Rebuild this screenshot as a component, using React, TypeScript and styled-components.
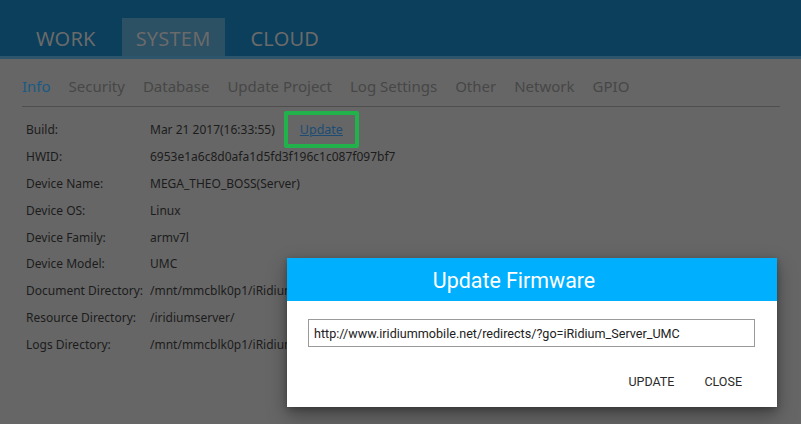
import React from "react";
import styled, { createGlobalStyle } from "styled-components";

const Global = createGlobalStyle`
  html, body { margin: 0; padding: 0; background: #666666; }
  body { width: 801px; height: 424px; overflow: hidden; font-family: "Noto Sans", "Open Sans", sans-serif; }
`;

const Page = styled.div`
  position: relative;
  width: 801px;
  height: 424px;
  background: #666666;
`;

const Header = styled.header`
  height: 56px;
  background: #0b3f5c;
  border-bottom: 3px solid #2d566c;
  display: flex;
  align-items: flex-end;
  padding-left: 22px;
  gap: 12px;
`;

const MainTab = styled.div<{ $active?: boolean }>`
  height: 38px;
  padding: 0 14px;
  display: flex;
  align-items: center;
  font-size: 20px;
  color: #6a6a6a;
  background: ${(p) => (p.$active ? "#2c5064" : "transparent")};
  letter-spacing: 0.2px;
  padding-top: 2px;
  box-sizing: border-box;
`;

const SubTabs = styled.nav`
  margin: 0 21px 0 22px;
  padding: 16px 0 9px;
  display: flex;
  gap: 18px;
  border-bottom: 1px solid #4e4e4e;
`;

const SubTab = styled.span<{ $active?: boolean }>`
  font-size: 15px;
  line-height: 22px;
  color: ${(p) => (p.$active ? "#1a5a84" : "#474747")};
`;

const InfoGrid = styled.div`
  display: grid;
  grid-template-columns: 124px auto;
  grid-auto-rows: 26.9px;
  margin: 9px 0 0 26px;
  align-items: center;
  font-size: 12px;
  color: #1c1c1c;
  width: max-content;
`;

const Value = styled.div`
  display: flex;
  align-items: center;
  gap: 9px;
`;

const Highlight = styled.span`
  border: 4px solid #22b24c;
  border-radius: 2px;
  padding: 6px 12px 6px 12px;
  margin: -10px 0;
`;

const Link = styled.a`
  color: #1b4c74;
  text-decoration: underline;
  font-size: 12.5px;
`;

const Dialog = styled.div`
  position: absolute;
  left: 287px;
  top: 258px;
  width: 490px;
  height: 149px;
  background: #ffffff;
  box-shadow: 0 8px 18px rgba(0, 0, 0, 0.35), 0 2px 6px rgba(0, 0, 0, 0.25);
  font-family: Roboto, "Noto Sans", sans-serif;
  display: flex;
  flex-direction: column;
`;

const DialogTitle = styled.div`
  height: 43px;
  background: #00b0ff;
  color: #ffffff;
  font-size: 21.4px;
  display: flex;
  align-items: center;
  justify-content: center;
  padding: 1px 36px 0 0;
  box-sizing: border-box;
`;

const DialogBody = styled.div`
  padding: 18px 22px 0 21px;
`;

const UrlInput = styled.div`
  height: 28px;
  border: 1px solid #9a9a9a;
  box-sizing: border-box;
  display: flex;
  align-items: center;
  padding-left: 5px;
  font-size: 12.6px;
  color: #222;
`;

const Actions = styled.div`
  display: flex;
  justify-content: flex-end;
  gap: 30px;
  padding: 27px 35px 0 0;
`;

const ActionButton = styled.span`
  font-size: 12.5px;
  color: #2a2a2a;
  text-transform: uppercase;
`;

const rows: [string, React.ReactNode][] = [
  ["HWID:", "6953e1a6c8d0afa1d5fd3f196c1c087f097bf7"],
  ["Device Name:", "MEGA_THEO_BOSS(Server)"],
  ["Device OS:", "Linux"],
  ["Device Family:", "armv7l"],
  ["Device Model:", "UMC"],
  ["Document Directory:", "/mnt/mmcblk0p1/iRidium"],
  ["Resource Directory:", "/iridiumserver/"],
  ["Logs Directory:", "/mnt/mmcblk0p1/iRidium"],
];

export default function App() {
  return (
    <Page>
      <Global />
      <Header>
        <MainTab>WORK</MainTab>
        <MainTab $active>SYSTEM</MainTab>
        <MainTab>CLOUD</MainTab>
      </Header>
      <SubTabs>
        {["Info", "Security", "Database", "Update Project", "Log Settings", "Other", "Network", "GPIO"].map((t, i) => (
          <SubTab key={t} $active={i === 0}>{t}</SubTab>
        ))}
      </SubTabs>
      <InfoGrid>
        <div>Build:</div>
        <Value>
          Mar 21 2017(16:33:55)
          <Highlight><Link>Update</Link></Highlight>
        </Value>
        {rows.map(([l, v]) => (
          <React.Fragment key={l}>
            <div>{l}</div>
            <Value>{v}</Value>
          </React.Fragment>
        ))}
      </InfoGrid>
      <Dialog>
        <DialogTitle>Update Firmware</DialogTitle>
        <DialogBody>
          <UrlInput>http://www.iridiummobile.net/redirects/?go=iRidium_Server_UMC</UrlInput>
        </DialogBody>
        <Actions>
          <ActionButton>Update</ActionButton>
          <ActionButton>Close</ActionButton>
        </Actions>
      </Dialog>
    </Page>
  );
}
